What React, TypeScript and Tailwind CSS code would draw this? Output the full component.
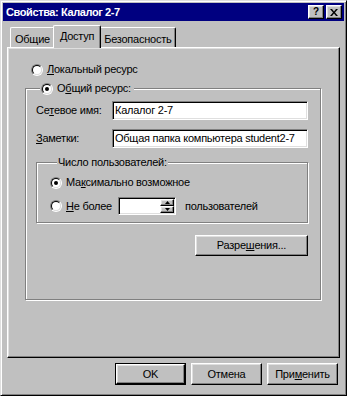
import type { ReactNode } from 'react';

const RAISED =
  'border border-t-white border-l-white border-r-black border-b-black shadow-[inset_-1px_-1px_0_#808080,inset_1px_1px_0_#dfdfdf]';
const SUNKEN =
  'border border-t-[#808080] border-l-[#808080] border-r-white border-b-white shadow-[inset_1px_1px_0_#000,inset_-1px_-1px_0_#dfdfdf] bg-white';
const GROUP = 'border border-[#808080] shadow-[inset_1px_1px_0_#fff,1px_1px_0_#fff]';

function Radio({ checked }: { checked?: boolean }) {
  return (
    <span className="flex h-[12px] w-[12px] shrink-0 rounded-full border border-t-[#808080] border-l-[#808080] border-r-white border-b-white">
      <span className="flex flex-1 items-center justify-center rounded-full border border-t-black border-l-black border-r-[#dfdfdf] border-b-[#dfdfdf] bg-white">
        {checked && <span className="h-[4px] w-[4px] rounded-full bg-black" />}
      </span>
    </span>
  );
}

function Tab({ label, active }: { label: string; active?: boolean }) {
  if (active) {
    return (
      <div className="relative z-10 -mx-[2px] -mb-px h-[23px] rounded-t-[2px] border border-b-0 border-t-white border-l-white border-r-black bg-[#c0c0c0] px-[6px] pt-[4px] shadow-[inset_-1px_0_0_#808080]">
        {label}
      </div>
    );
  }
  return (
    <div className="h-[20px] rounded-t-[2px] border border-b-0 border-t-white border-l-white border-r-black px-[4px] pt-[5px] shadow-[inset_-1px_0_0_#808080]">
      {label}
    </div>
  );
}

function TitleButton({ children }: { children: ReactNode }) {
  return (
    <div className={`flex h-[14px] w-[16px] items-center justify-center bg-[#c0c0c0] ${RAISED}`}>
      {children}
    </div>
  );
}

function Button({ children, isDefault }: { children: ReactNode; isDefault?: boolean }) {
  if (isDefault) {
    return (
      <div className="flex h-[22px] w-[71px] border border-black">
        <div className={`flex flex-1 items-center justify-center ${RAISED}`}>{children}</div>
      </div>
    );
  }
  return <div className={`flex h-[22px] w-[71px] items-center justify-center ${RAISED}`}>{children}</div>;
}

function Arrow({ up }: { up?: boolean }) {
  return (
    <svg width="5" height="3" viewBox="0 0 5 3">
      <path d={up ? 'M2.5 0L5 3H0z' : 'M0 0h5L2.5 3z'} fill="#000" />
    </svg>
  );
}

export default function App() {
  return (
    <div className="flex h-[396px] w-[347px] flex-col border border-t-[#dfdfdf] border-l-[#dfdfdf] border-r-black border-b-black bg-[#c0c0c0] p-[2px] font-['Liberation_Sans',Arial,sans-serif] text-[11px] leading-[13px] tracking-[-0.25px] text-black shadow-[inset_1px_1px_0_#fff,inset_-1px_-1px_0_#808080]">
      {/* title bar */}
      <div className="flex h-[18px] shrink-0 items-center justify-between bg-[#000080] pl-[3px] pr-[2px]">
        <span className="font-bold tracking-[-0.4px] text-white">Свойства: Калалог 2-7</span>
        <div className="flex gap-[2px]">
          <TitleButton>
            <span className="text-[10px] font-bold leading-none">?</span>
          </TitleButton>
          <TitleButton>
            <svg width="8" height="7" viewBox="0 0 8 7">
              <path d="M0 0h2l2 2.5L6 0h2L5 3.5 8 7H6L4 4.5 2 7H0l3-3.5z" fill="#000" />
            </svg>
          </TitleButton>
        </div>
      </div>

      {/* tabs */}
      <div className="ml-[4px] mt-[4px] flex h-[22px] shrink-0 items-end pl-[3px]">
        <Tab label="Общие" />
        <Tab label="Доступ" active />
        <Tab label="Безопасность" />
      </div>

      <div className="ml-[4px] flex h-[311px] w-[333px] shrink-0 flex-col border border-t-white border-l-white border-r-black border-b-black pl-[17px] pt-[15px] shadow-[inset_-1px_-1px_0_#808080,inset_1px_1px_0_#dfdfdf]">
        <div className="ml-[6px] flex h-[13px] items-center gap-[4px]">
          <Radio />
          <span>
            <u>Л</u>окальный ресурс
          </span>
        </div>

        <fieldset className={`mt-[6px] w-[296px] pb-[43px] pl-[10px] pr-[12px] pt-[6px] ${GROUP}`}>
          <legend className="ml-[4px] bg-[#c0c0c0] pl-[1px] pr-[3px]">
            <span className="flex h-[13px] items-center gap-[4px]">
              <Radio checked />
              <span>
                О<u>б</u>щий ресурс:
              </span>
            </span>
          </legend>

          <div className="flex items-center">
            <span className="w-[76px]">
              Се<u>т</u>евое имя:
            </span>
            <div className={`flex h-[19px] w-[196px] items-center pl-[2px] ${SUNKEN}`}>Калалог 2-7</div>
          </div>
          <div className="mt-[9px] flex items-center">
            <span className="w-[76px]">
              <u>З</u>аметки:
            </span>
            <div className={`flex h-[19px] w-[196px] items-center pl-[2px] ${SUNKEN}`}>
              Общая папка компьютера student2-7
            </div>
          </div>

          <fieldset className={`mt-[8px] w-[272px] pb-[7px] pl-[13px] pt-[7px] ${GROUP}`}>
            <legend className="ml-[7px] bg-[#c0c0c0] px-[1px]">Число пользователей:</legend>
            <div className="flex h-[13px] items-center gap-[4px]">
              <Radio checked />
              <span>
                Ма<u>к</u>симально возможное
              </span>
            </div>
            <div className="mt-[8px] flex h-[18px] items-center">
              <Radio />
              <span className="ml-[4px] w-[52px]">
                <u>Н</u>е более
              </span>
              <div className={`flex h-[18px] w-[58px] justify-end ${SUNKEN} pr-px`}>
                <div className="my-px flex w-[14px] flex-col">
                  <div className={`flex flex-1 items-center justify-center bg-[#c0c0c0] ${RAISED}`}>
                    <Arrow up />
                  </div>
                  <div className={`flex flex-1 items-center justify-center bg-[#c0c0c0] ${RAISED}`}>
                    <Arrow />
                  </div>
                </div>
              </div>
              <span className="ml-[9px]">пользователей</span>
            </div>
          </fieldset>

          <div className="mt-[12px] flex justify-end">
            <div className={`flex h-[21px] w-[113px] items-center justify-center ${RAISED}`}>
              <span>
                Разре<u>ш</u>ения...
              </span>
            </div>
          </div>
        </fieldset>
      </div>

      {/* dialog buttons */}
      <div className="mt-[5px] flex justify-end gap-[5px] pr-[6px]">
        <Button isDefault>OK</Button>
        <Button>Отмена</Button>
        <Button>
          <span>
            При<u>м</u>енить
          </span>
        </Button>
      </div>
    </div>
  );
}
